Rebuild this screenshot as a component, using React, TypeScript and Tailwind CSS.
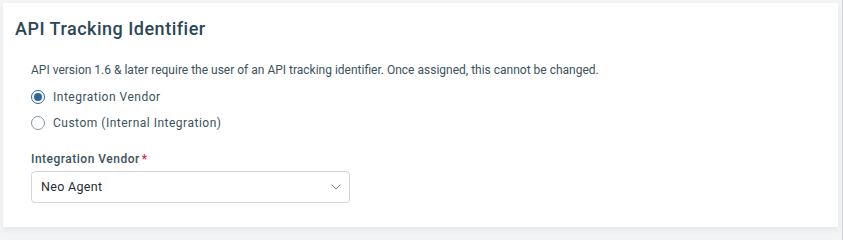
import { ChevronDown } from "lucide-react";

export default function App() {
  return (
    <div
      className="h-[240px] w-[843px] bg-[#f3f4f6] border-r border-[#d4d6d9] pt-[3px] pl-[3px] pr-[4px]"
      style={{ fontFamily: "Roboto, 'Liberation Sans', sans-serif" }}
    >
      <div className="h-[224px] bg-white shadow-[0_3px_6px_rgba(0,0,0,0.06)]">
        <h2 className="pl-[12px] pt-[14px] text-[18px] leading-[24px] font-medium text-[#2b4756] tracking-[0.5px]">
          API Tracking Identifier
        </h2>

        <div className="pl-[28px] pt-[21px]">
          <p className="text-[12px] leading-[16px] text-[#3b5260]">
            API version 1.6 &amp; later require the user of an API tracking identifier. Once assigned, this cannot be changed.
          </p>

          <div className="mt-[11px] flex flex-col gap-[10px]">
            <label className="flex items-center gap-[8px] h-[16px]">
              <span className="w-[14px] h-[14px] rounded-full border-[1.5px] border-[#2f6698] flex items-center justify-center">
                <span className="w-[8px] h-[8px] rounded-full bg-[#2f6698]" />
              </span>
              <span className="text-[12px] tracking-[0.5px] text-[#3b5260]">Integration Vendor</span>
            </label>
            <label className="flex items-center gap-[8px] h-[16px]">
              <span className="w-[14px] h-[14px] rounded-full border border-[#8a949b]" />
              <span className="text-[12px] tracking-[0.5px] text-[#3b5260]">Custom (Internal Integration)</span>
            </label>
          </div>

          <div className="mt-[21px] flex items-start text-[12px] leading-[14px] font-medium tracking-[0.5px] text-[#3b5260]">
            Integration Vendor
            <span className="text-[#e0243a] ml-[2px]">*</span>
          </div>

          <div className="mt-[5px] w-[319px] h-[32px] border border-[#d2d6da] rounded-[4px] flex items-center justify-between pl-[9px] pr-[5px]">
            <span className="text-[12.5px] text-[#1f2d36] tracking-[0.3px]">Neo Agent</span>
            <ChevronDown size={16} strokeWidth={1.4} className="text-[#6b7680]" />
          </div>
        </div>
      </div>
    </div>
  );
}
